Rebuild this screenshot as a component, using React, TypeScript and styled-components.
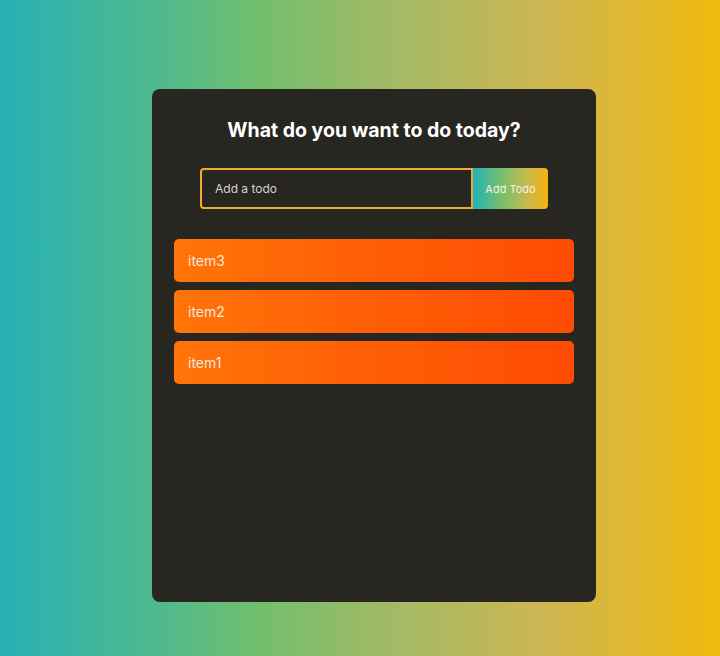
import React from "react";
import styled, { createGlobalStyle } from "styled-components";

const Global = createGlobalStyle`
  html, body { margin: 0; padding: 0; }
  body {
    font-family: Inter, "Noto Sans", "Liberation Sans", sans-serif;
    background: linear-gradient(90deg, #27b1b3 0%, #4fb98f 22%, #72bf6c 36%, #a4b966 55%, #cdb653 75%, #f0b90d 100%);
    min-height: 656px;
  }
`;

const Page = styled.div`
  height: 656px;
  box-sizing: border-box;
  padding: 89px 0 0 152px;
`;

const Panel = styled.div`
  width: 444px;
  height: 513px;
  box-sizing: border-box;
  background: #272620;
  border-radius: 8px;
  padding: 27px 22px;
  display: flex;
  flex-direction: column;
  align-items: center;
`;

const Title = styled.h1`
  margin: 0;
  color: #ffffff;
  font-size: 19.5px;
  font-weight: 700;
  line-height: 28px;
`;

const Form = styled.form`
  display: flex;
  margin-top: 24px;
  height: 41px;
`;

const Input = styled.input`
  width: 273px;
  box-sizing: border-box;
  height: 41px;
  background: transparent;
  border: 2px solid #f2a93b;
  border-radius: 4px 0 0 4px;
  padding: 0 13px;
  color: #fff;
  font-family: inherit;
  font-size: 12px;
  outline: none;
  &::placeholder { color: #d6d4cc; }
`;

const Button = styled.button`
  width: 75px;
  height: 41px;
  border: none;
  border-radius: 0 4px 4px 0;
  background: linear-gradient(90deg, #1fb3b8 0%, #7cbf6a 40%, #cdb84a 75%, #f5b40c 100%);
  color: #f4f1e6;
  font-family: inherit;
  font-size: 11px;
  padding: 0;
  cursor: pointer;
`;

const List = styled.div`
  align-self: stretch;
  display: flex;
  flex-direction: column;
  gap: 8px;
  margin-top: 30px;
`;

const Item = styled.div`
  height: 43px;
  display: flex;
  align-items: center;
  padding: 0 14px;
  border-radius: 5px;
  background: linear-gradient(90deg, #ff7408 0%, #ff5a05 60%, #ff4b03 100%);
  color: #f7e6dc;
  font-size: 14px;
`;

export default function App() {
  const items = ["item3", "item2", "item1"];
  return (
    <Page>
      <Global />
      <Panel>
        <Title>What do you want to do today?</Title>
        <Form onSubmit={(e) => e.preventDefault()}>
          <Input placeholder="Add a todo" />
          <Button type="submit">Add Todo</Button>
        </Form>
        <List>
          {items.map((t) => (
            <Item key={t}>{t}</Item>
          ))}
        </List>
      </Panel>
    </Page>
  );
}
